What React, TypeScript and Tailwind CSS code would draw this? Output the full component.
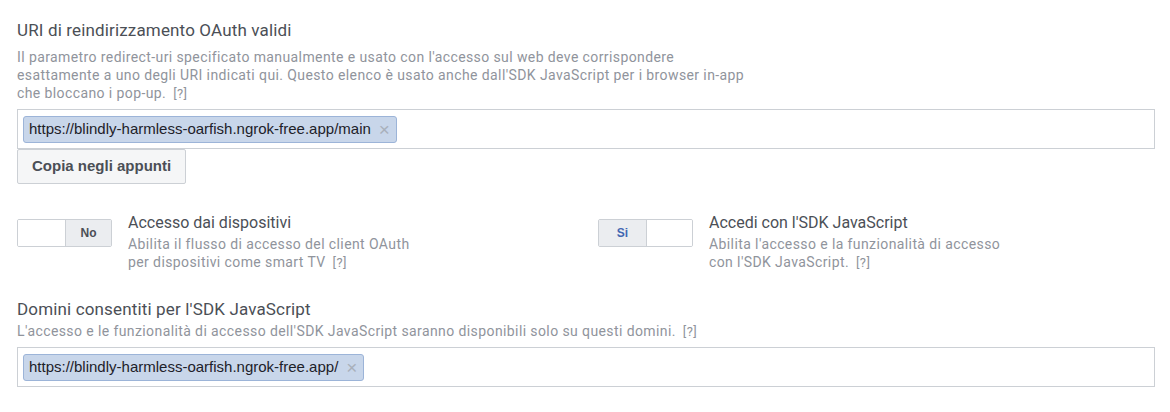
const Help = () => <span className="ml-[7px] text-[13px] text-[#90949c]">[?]</span>

const Token = ({ url }: { url: string }) => (
  <span className="inline-flex h-[27px] items-center gap-[8px] rounded-[3px] border border-[#9cb4d8] bg-[#c8d6ea] pl-[5px] pr-[6px] font-['Liberation_Sans',Arial,sans-serif] text-[15px] text-[#1d2129]">
    {url}
    <span className="text-[19px] leading-none text-[#a9b0bb]">×</span>
  </span>
)

const TokenInput = ({ url }: { url: string }) => (
  <div className="flex h-[40px] w-[1138px] items-center border border-[#ccd0d5] bg-white px-[5px]">
    <Token url={url} />
  </div>
)

const Toggle = ({ on }: { on: boolean }) => (
  <div className="flex h-[28px] w-[95px] shrink-0 overflow-hidden rounded-[2px] border border-[#ccd0d5] font-['Liberation_Sans',Arial,sans-serif] text-[12px] font-bold">
    {on ? (
      <>
        <div className="flex w-[48px] items-center justify-center border-r border-[#ccd0d5] bg-[#ebedf0] text-[#4267b2]">Si</div>
        <div className="flex-1 bg-white" />
      </>
    ) : (
      <>
        <div className="w-[48px] border-r border-[#ccd0d5] bg-white" />
        <div className="flex flex-1 items-center justify-center bg-[#ebedf0] text-[#4b4f56]">No</div>
      </>
    )}
  </div>
)

const ToggleItem = ({ on, title, children }: { on: boolean; title: string; children: React.ReactNode }) => (
  <div className="flex gap-[16px]">
    <Toggle on={on} />
    <div className="-mt-[6px]">
      <div className="text-[16px] leading-[20px] text-[#4b4f56]">{title}</div>
      <div className="mt-[2px] text-[14px] leading-[18px] tracking-[0.4px] text-[#90949c]">{children}</div>
    </div>
  </div>
)

export default function App() {
  return (
    <div className="h-[412px] w-[1170px] bg-white pl-[17px] pt-[20px] font-['Roboto',sans-serif]">
      <div className="text-[17px] leading-[20px] tracking-[0.15px] text-[#4b4f56]">URI di reindirizzamento OAuth validi</div>
      <div className="mt-[8px] text-[14px] leading-[18px] tracking-[0.4px] text-[#90949c]">
        Il parametro redirect-uri specificato manualmente e usato con l'accesso sul web deve corrispondere
        <br />
        esattamente a uno degli URI indicati qui. Questo elenco è usato anche dall'SDK JavaScript per i browser in-app
        <br />
        che bloccano i pop-up.
        <Help />
      </div>
      <div className="mt-[6px]">
        <TokenInput url="https://blindly-harmless-oarfish.ngrok-free.app/main" />
      </div>
      <button className="block h-[35px] rounded-[2px] border border-[#ccd0d5] bg-[#f5f6f7] px-[14px] font-['Liberation_Sans',Arial,sans-serif] text-[15px] font-bold text-[#4b4f56]">
        Copia negli appunti
      </button>

      <div className="mt-[35px] grid w-[1138px] grid-cols-2 gap-x-[24px]">
        <ToggleItem on={false} title="Accesso dai dispositivi">
          Abilita il flusso di accesso del client OAuth
          <br />
          per dispositivi come smart TV
          <Help />
        </ToggleItem>
        <ToggleItem on={true} title="Accedi con l'SDK JavaScript">
          Abilita l'accesso e la funzionalità di accesso
          <br />
          con l'SDK JavaScript.
          <Help />
        </ToggleItem>
      </div>

      <div className="mt-[27px] text-[17px] leading-[20px] tracking-[0.15px] text-[#4b4f56]">Domini consentiti per l'SDK JavaScript</div>
      <div className="mt-[3px] text-[14px] leading-[18px] tracking-[0.4px] text-[#90949c]">
        L'accesso e le funzionalità di accesso dell'SDK JavaScript saranno disponibili solo su questi domini.
        <Help />
      </div>
      <div className="mt-[6px]">
        <TokenInput url="https://blindly-harmless-oarfish.ngrok-free.app/" />
      </div>
    </div>
  )
}
